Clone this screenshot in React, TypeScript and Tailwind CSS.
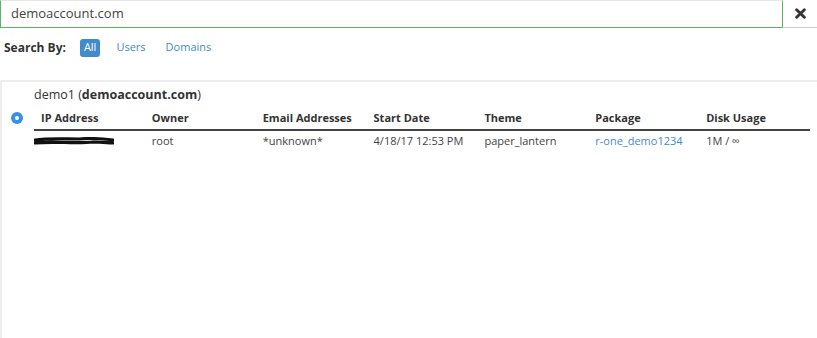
import React from "react";

const cols = ["IP Address", "Owner", "Email Addresses", "Start Date", "Theme", "Package", "Disk Usage"];

export default function App() {
  return (
    <div className="w-[817px] h-[338px] bg-white overflow-hidden text-[#333]" style={{ fontFamily: '"Open Sans", "Noto Sans", sans-serif' }}>
      <div className="flex h-[28px]">
        <div className="flex-1 flex items-center border border-[#5cb85c] border-t-[#e8e8e8] pl-[10px] text-[13px] text-[#444]">
          demoaccount.com
        </div>
        <div className="w-[34px] flex items-center justify-center border-b border-[#ccc]">
          <svg width="11" height="11" viewBox="0 0 10 10">
            <path d="M1.5 1.5 L8.5 8.5 M8.5 1.5 L1.5 8.5" stroke="#333" strokeWidth="2.6" strokeLinecap="round" />
          </svg>
        </div>
      </div>
      <div className="flex items-center h-[38px] pt-[1px] pl-[4px] text-[12px]">
        <span className="font-bold text-[#333] mr-[14px]">Search By:</span>
        <span className="bg-[#428bca] text-white rounded-[3px] px-[4px] h-[18px] flex items-center text-[11px] mr-[16px]">All</span>
        <span className="text-[#428bca] text-[11px] mr-[20px]">Users</span>
        <span className="text-[#428bca] text-[11px]">Domains</span>
      </div>
      <div className="mt-[14px] border-t-2 border-l-2 border-[#eee] h-[260px]">
        <div className="pl-[32px] pt-[4px] text-[12.5px] text-[#333] h-[22px] flex items-center">
          demo1 (<span className="font-bold">demoaccount.com</span>)
        </div>
        <div className="flex mt-[4px]">
          <div className="w-[32px] flex justify-center pt-[4px]">
            <svg width="12" height="12" viewBox="0 0 12 12" className="ml-[-2px]">
              <circle cx="6" cy="6" r="6" fill="#3a8ee6" />
              <circle cx="6" cy="6" r="2" fill="white" />
            </svg>
          </div>
          <div className="w-[776px]">
            <div className="grid grid-cols-7 border-b-2 border-[#444] h-[23px] items-center text-[11px] font-bold text-[#333]">
              {cols.map((c) => (
                <div key={c} className="pl-[7px]">{c}</div>
              ))}
            </div>
            <div className="grid grid-cols-7 h-[20px] items-center text-[11px] text-[#444]">
              <div className="flex items-center">
                <svg width="80" height="9" viewBox="0 0 80 9">
                  <path d="M1 3 C15 1 30 2 45 2 C55 1 70 2 79 3 M1 6 C20 4 40 7 60 5 C68 5 75 6 79 6" stroke="#111" strokeWidth="3.2" fill="none" strokeLinecap="round" />
                </svg>
              </div>
              <div className="pl-[7px]">root</div>
              <div className="pl-[7px]">*unknown*</div>
              <div className="pl-[7px]">4/18/17 12:53 PM</div>
              <div className="pl-[7px]">paper_lantern</div>
              <div className="pl-[7px] text-[#428bca]">r-one_demo1234</div>
              <div className="pl-[7px]">1M / ∞</div>
            </div>
          </div>
        </div>
      </div>
    </div>
  );
}
